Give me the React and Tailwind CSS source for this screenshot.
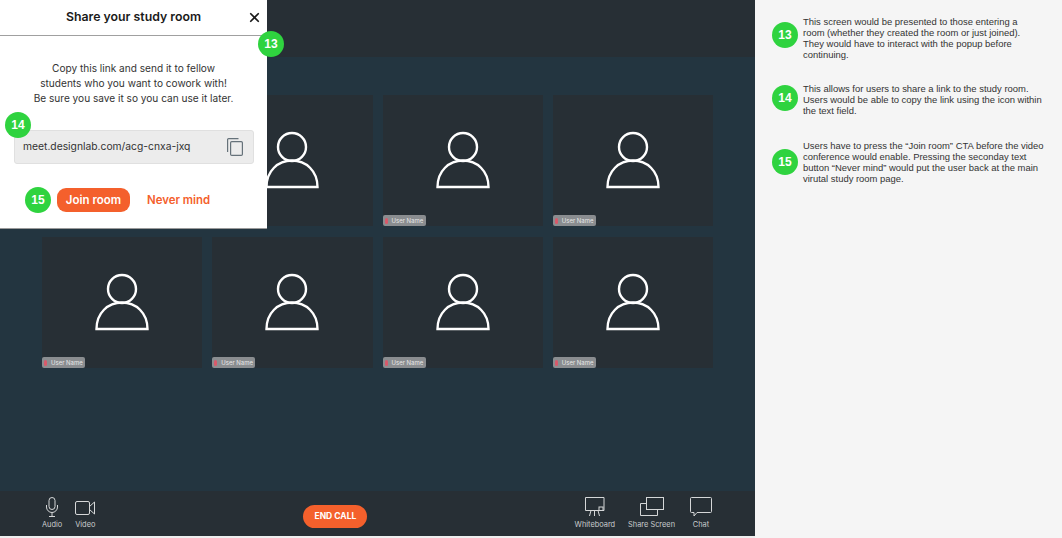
import { X } from 'lucide-react';

const UI_FONT = 'font-["Inter",sans-serif]';

const NOTES = [
    {
        num: 13,
        badgeClass: '-mt-[8px]',
        gapClass: '',
        lines: [
            'This screen would be presented to those entering a',
            'room (whether they created the room or just joined).',
            'They would have to interact with the popup before',
            'continuing.',
        ],
    },
    {
        num: 14,
        badgeClass: '-mt-[4px]',
        gapClass: 'mt-[24px]',
        lines: [
            'This allows for users to share a link to the study room.',
            'Users would be able to copy the link using the icon within',
            'the text field.',
        ],
    },
    {
        num: 15,
        badgeClass: '-mt-[2px]',
        gapClass: 'mt-[25px]',
        lines: [
            'Users have to press the “Join room” CTA before the video',
            'conference would enable. Pressing the seconday text',
            'button “Never mind” would put the user back at the main',
            'virutal study room page.',
        ],
    },
];

function Badge({ num, className = '' }) {
    return (
        <div className={`flex h-[26px] w-[26px] shrink-0 items-center justify-center rounded-full bg-[#2fd33f] font-["Liberation_Sans",sans-serif] text-[12px] font-bold text-white ${className}`}>
            {num}
        </div>
    );
}

function PersonIcon() {
    return (
        <svg width="54" height="58" viewBox="0 0 54 58" fill="none" stroke="#fff" strokeWidth="2.4">
            <circle cx="27" cy="16" r="14" />
            <path d="M1.5 56 C1.5 40 13 29.5 27 29.5 C41 29.5 52.5 40 52.5 56 Z" />
        </svg>
    );
}

function Tile() {
    return (
        <div className="relative flex h-[131px] items-center justify-center bg-[#272f35]">
            <div className="-mt-[2px]"><PersonIcon /></div>
            <div className={`absolute bottom-0 left-0 flex h-[11px] w-[43px] items-center gap-[2px] rounded-[2px] bg-[#8a8d90] pl-[2px] ${UI_FONT} text-[6px] text-[#e8e8e8]`}>
                <span className="h-[6px] w-[3px] rounded-full bg-[#d9596a]" />
                <span className="ml-[2px] whitespace-nowrap">User Name</span>
            </div>
        </div>
    );
}

function ToolButton({ label, children }) {
    return (
        <div className="flex flex-col items-center">
            <div className="flex h-[20px] items-end">{children}</div>
            <span className={`mt-[3px] whitespace-nowrap ${UI_FONT} text-[7.4px] leading-[10px] text-[#c9cccd]`}>{label}</span>
        </div>
    );
}

function ShareModal() {
    return (
        <div className={`absolute left-0 top-0 z-10 h-[229px] w-[267px] border-b border-[#9a9a9a] bg-white ${UI_FONT}`}>
            <div className="relative flex h-[36px] items-center justify-center border-b border-[#a0a0a0]">
                <span className="text-[12.3px] font-semibold text-[#1a1a1a]">Share your study room</span>
                <X size={15} strokeWidth={2.8} className="absolute right-[5px] top-[10px] text-[#1a1a1a]" />
            </div>
            <p className="mt-[25px] text-center text-[10.1px] leading-[15px] text-[#333]">
                Copy this link and send it to fellow<br />
                students who you want to cowork with!<br />
                Be sure you save it so you can use it later.
            </p>
            <div className="ml-[14px] mt-[24px] flex h-[34px] w-[240px] items-center justify-between rounded-[3px] border border-[#e0e0e0] bg-[#ececec] pl-[8px] pr-[10px]">
                <span className="-mt-[1px] text-[10.3px] text-[#333]">meet.designlab.com/acg-cnxa-jxq</span>
                <svg width="16" height="18" viewBox="0 0 16 18" fill="none" stroke="#66727a" strokeWidth="1.2">
                    <path d="M11.5 0.6H1.6a1 1 0 0 0-1 1V14" />
                    <rect x="3.6" y="3.6" width="11.8" height="13.8" rx="1.2" />
                </svg>
            </div>
            <div className="ml-[57px] mt-[24px] flex items-center gap-[17px]">
                <button className="h-[24px] w-[73px] rounded-[9px] bg-[#f4602c] pt-[1px] text-[11.5px] font-semibold text-white">Join room</button>
                <span className="pt-[1px] text-[11.4px] font-semibold text-[#f4602c]">Never mind</span>
            </div>
            <Badge num={13} className="absolute left-[258px] top-[31px]" />
            <Badge num={14} className="absolute left-[5px] top-[112px]" />
            <Badge num={15} className="absolute left-[25px] top-[187px]" />
        </div>
    );
}

export default function App() {
    return (
        <div className="flex h-[538px] w-[1062px] overflow-hidden bg-[#f5f5f5]">
            <div className="relative flex w-[755px] shrink-0 flex-col">
                <ShareModal />
                <div className="h-[57px] bg-[#272f35]" />
                <div className="flex-1 bg-[#233540] pl-[42px] pr-[42px] pt-[38px]">
                    <div className="grid grid-cols-4 gap-x-[10px] gap-y-[11px]">
                        {Array.from({ length: 8 }).map((_, i) => <Tile key={i} />)}
                    </div>
                </div>
                <div className="flex h-[45px] items-start bg-[#272f35] pl-[42px] pr-[42px] pt-[6px]">
                    <div className="flex gap-[13px]">
                        <ToolButton label="Audio">
                            <svg width="12" height="20" viewBox="0 0 12 20" fill="none" stroke="#d5d7d8" strokeWidth="1">
                                <rect x="3" y="0.5" width="6" height="12" rx="3" />
                                <path d="M0.5 8v2a5.5 5.5 0 0 0 11 0V8M6 15.5v4M3 19.5h6" />
                            </svg>
                        </ToolButton>
                        <ToolButton label="Video">
                            <svg className="mb-[2px]" width="20" height="14" viewBox="0 0 20 14" fill="none" stroke="#d5d7d8" strokeWidth="1">
                                <rect x="0.5" y="0.5" width="14" height="13" rx="1.5" />
                                <path d="M14.5 5.5 L19.5 1 V13 L14.5 8.5" />
                            </svg>
                        </ToolButton>
                    </div>
                    <button className={`ml-[208px] h-[23px] w-[64px] self-center rounded-full bg-[#f4602c] ${UI_FONT} text-[8.5px] font-bold text-white`}>END CALL</button>
                    <div className="ml-auto flex items-start gap-[13px]">
                        <ToolButton label="Whiteboard">
                            <svg width="20" height="20" viewBox="0 0 20 20" fill="none" stroke="#d5d7d8" strokeWidth="1">
                                <path d="M0.5 0.5h18.5v13h-18.5zM6 13.5l-1.5 5.5M9.5 13.5v5.5M13 13.5l1.5 5.5" />
                                <rect x="14" y="10" width="4" height="3.5" />
                            </svg>
                        </ToolButton>
                        <ToolButton label="Share Screen">
                            <svg className="mb-[1px]" width="24" height="19" viewBox="0 0 24 19" fill="none" stroke="#d5d7d8" strokeWidth="1">
                                <rect x="6.5" y="0.5" width="17" height="12" />
                                <path d="M6.5 6.5H0.5v12h17v-6" />
                            </svg>
                        </ToolButton>
                        <div className="ml-[2px] mr-[1px]">
                            <ToolButton label="Chat">
                                <svg width="22" height="20" viewBox="0 0 22 20" fill="none" stroke="#d5d7d8" strokeWidth="1">
                                    <path d="M1.5 0.5h19a1 1 0 0 1 1 1v13a1 1 0 0 1-1 1H7l-3 3.5v-3.5H1.5a1 1 0 0 1-1-1v-13a1 1 0 0 1 1-1z" />
                                </svg>
                            </ToolButton>
                        </div>
                    </div>
                </div>
                <div className="h-[2px] bg-[#eeeeee]" />
            </div>

            {/* Annotations */}
            <div className="flex flex-1 flex-col pl-[17px] pt-[17px] font-['Liberation_Sans',sans-serif]">
                {NOTES.map(({ num, lines, badgeClass, gapClass }) => (
                    <div key={num} className={`flex items-center gap-[5px] ${gapClass}`}>
                        <Badge num={num} className={badgeClass} />
                        <p className="-mt-[1px] text-[9.45px] leading-[11px] text-[#333]">
                            {lines.map(l => <span key={l} className="block whitespace-nowrap">{l}</span>)}
                        </p>
                    </div>
                ))}
            </div>
        </div>
    );
}
